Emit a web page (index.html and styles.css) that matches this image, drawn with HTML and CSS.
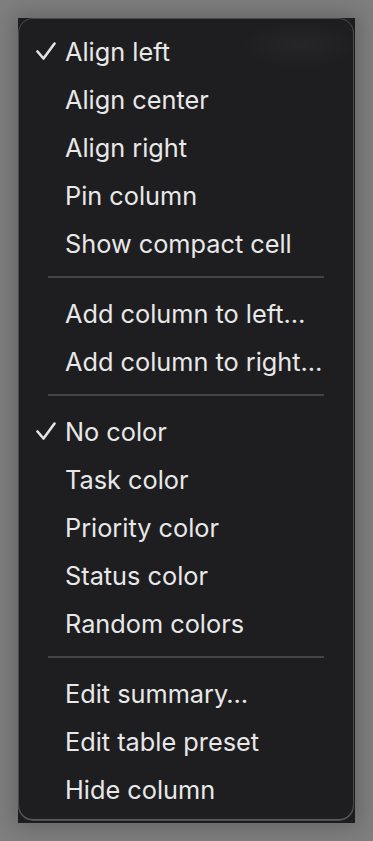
FILE: index.html
```html
<!DOCTYPE html>
<html lang="en">
<head>
<meta charset="utf-8">
<title>Column menu</title>
<link rel="stylesheet" href="styles.css">
</head>
<body>
<div class="backdrop">
  <div class="menu">
    <div class="item"><span class="check"><svg viewBox="0 0 20 18" width="20" height="18"><polyline points="1.5,9.5 7.5,16.5 18.5,1.5" fill="none" stroke="#e4e4e4" stroke-width="2.6" stroke-linecap="round" stroke-linejoin="round"/></svg></span><span class="label">Align left</span></div>
    <div class="item"><span class="check"></span><span class="label">Align center</span></div>
    <div class="item"><span class="check"></span><span class="label">Align right</span></div>
    <div class="item"><span class="check"></span><span class="label">Pin column</span></div>
    <div class="item"><span class="check"></span><span class="label">Show compact cell</span></div>
    <div class="sep"></div>
    <div class="item"><span class="check"></span><span class="label">Add column to left…</span></div>
    <div class="item"><span class="check"></span><span class="label">Add column to right…</span></div>
    <div class="sep"></div>
    <div class="item"><span class="check"><svg viewBox="0 0 20 18" width="20" height="18"><polyline points="1.5,9.5 7.5,16.5 18.5,1.5" fill="none" stroke="#e4e4e4" stroke-width="2.6" stroke-linecap="round" stroke-linejoin="round"/></svg></span><span class="label">No color</span></div>
    <div class="item"><span class="check"></span><span class="label">Task color</span></div>
    <div class="item"><span class="check"></span><span class="label">Priority color</span></div>
    <div class="item"><span class="check"></span><span class="label">Status color</span></div>
    <div class="item"><span class="check"></span><span class="label">Random colors</span></div>
    <div class="sep"></div>
    <div class="item"><span class="check"></span><span class="label">Edit summary…</span></div>
    <div class="item"><span class="check"></span><span class="label">Edit table preset</span></div>
    <div class="item"><span class="check"></span><span class="label">Hide column</span></div>
  </div>
</div>
</body>
</html>
```
FILE: styles.css
```css
html, body {
  margin: 0;
  padding: 0;
}
body {
  width: 373px;
  height: 841px;
  background: #7f7f7f;
  font-family: Inter, "Noto Sans", "Liberation Sans", sans-serif;
  overflow: hidden;
}
.backdrop {
  margin: 18px 0 0 18px;
  width: 337px;
  height: 805px;
  background: #1d1d1f;
  box-shadow: 0 0 22px 4px rgba(0, 0, 0, 0.22);
}
.menu {
  box-sizing: border-box;
  width: 336px;
  height: 803px;
  padding: 9px 0 8px;
  border-radius: 15px;
  background:
    radial-gradient(ellipse 60px 24px at 282px 27px, rgba(255, 255, 255, 0.035), transparent),
    #1e1e20;
  box-shadow: inset 0 0 0 1px #4a4a4c, inset 0 -1px 0 1px #5c5c5e;
}
.item {
  display: flex;
  align-items: center;
  height: 48px;
  padding-left: 18px;
  color: #e8e8e8;
  font-size: 25.3px;
  white-space: nowrap;
}
.check {
  display: flex;
  align-items: center;
  width: 29px;
  height: 18px;
  flex: none;
  margin-top: -1px;
}
.check svg {
  display: block;
}
.sep {
  height: 2px;
  margin: 9px 30px 11px 30px;
  background: #454547;
}
```
